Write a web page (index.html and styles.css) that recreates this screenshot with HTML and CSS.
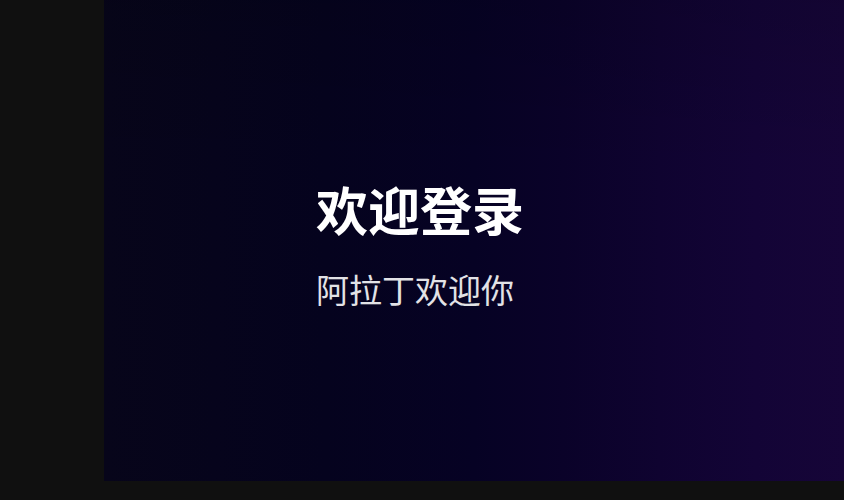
FILE: index.html
```html
<!DOCTYPE html>
<html lang="zh-CN">
<head>
<meta charset="utf-8">
<title>欢迎登录</title>
<link rel="stylesheet" href="styles.css">
</head>
<body>
<div class="page">
  <main class="hero">
    <div class="hero-text">
      <h1 class="title">欢迎登录</h1>
      <p class="subtitle">阿拉丁欢迎你</p>
    </div>
  </main>
</div>
</body>
</html>
```
FILE: styles.css
```css
html, body {
  margin: 0;
  padding: 0;
  background: #101010;
}
body {
  font-family: "Noto Sans CJK SC", "Noto Sans", sans-serif;
  width: 844px;
  height: 500px;
  overflow: hidden;
}
.page {
  padding-left: 104px;
  padding-bottom: 19px;
  height: 481px;
}
.hero {
  height: 481px;
  box-sizing: border-box;
  background:
    linear-gradient(180deg, rgba(0,0,0,0.1) 0%, rgba(0,0,0,0) 35%, rgba(0,0,0,0) 100%),
    linear-gradient(90deg, #07051a 0%, #05031e 30%, #060224 50%, #0a0229 62%, #0f0330 75%, #130436 88%, #160538 100%);
  display: flex;
  flex-direction: column;
  justify-content: flex-start;
  padding: 179px 0 0 212px;
}
.hero-text {
  display: flex;
  flex-direction: column;
}
.title {
  margin: 0;
  font-size: 52px;
  line-height: 60px;
  font-weight: 700;
  color: #ffffff;
  letter-spacing: 0;
}
.subtitle {
  margin: 30px 0 0 0;
  font-size: 33px;
  line-height: 40px;
  font-weight: 400;
  color: #e2e2e6;
}
```
